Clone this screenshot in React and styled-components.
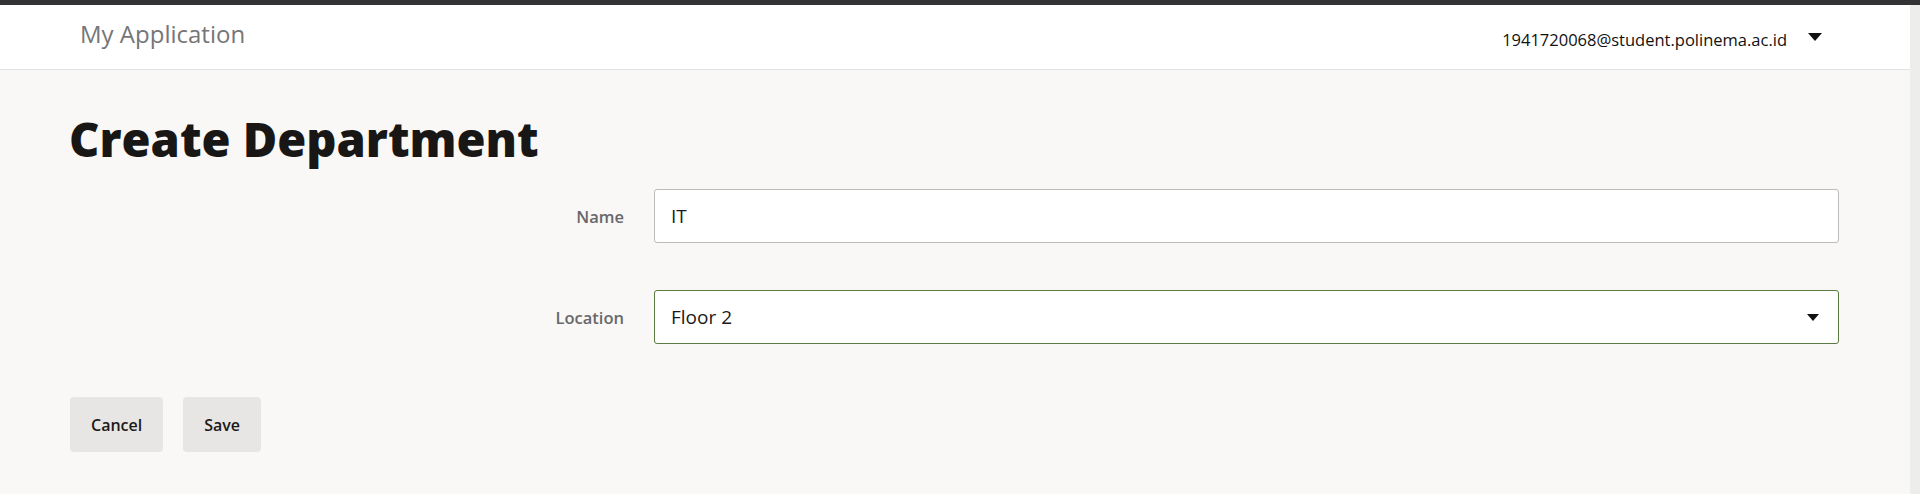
import React from "react";
import styled, { createGlobalStyle } from "styled-components";

const Global = createGlobalStyle`
  html, body { margin: 0; padding: 0; }
  body {
    background: #f9f8f7;
    font-family: "Open Sans", "Noto Sans", sans-serif;
    color: #1b1a19;
  }
`;

const TopStrip = styled.div`
  height: 5px;
  background: #333336;
`;

const Frame = styled.div`
  display: flex;
  min-height: 489px;
`;

const Main = styled.div`
  flex: 1;
  display: flex;
  flex-direction: column;
`;

const ScrollTrack = styled.div`
  width: 10px;
  background: #ededec;
`;

const Header = styled.header`
  height: 64px;
  background: #ffffff;
  border-bottom: 1px solid #e3e2e1;
  display: flex;
  align-items: center;
  justify-content: space-between;
  padding: 0 88px 0 80px;
`;

const Brand = styled.div`
  font-size: 24px;
  font-weight: 400;
  color: #767676;
  margin-top: -7px;
`;

const UserMenu = styled.div`
  display: flex;
  align-items: center;
  gap: 21px;
  font-size: 16.5px;
  color: #111;
`;

const Email = styled.span`
  margin-top: 4px;
`;

const Caret = styled.span`
  width: 0;
  height: 0;
  border-left: ${(p) => p.$w / 2}px solid transparent;
  border-right: ${(p) => p.$w / 2}px solid transparent;
  border-top: ${(p) => p.$h}px solid #111;
`;

const Content = styled.main`
  padding: 0 71px 0 70px;
`;

const Title = styled.h1`
  margin: 39px 0 0 -1px;
  font-size: 47px;
  font-weight: 800;
  line-height: 60px;
  color: #181716;
`;

const Form = styled.form`
  display: grid;
  grid-template-columns: 554px 1fr;
  column-gap: 30px;
  row-gap: 47px;
  margin-top: 20px;
  align-items: center;
`;

const Label = styled.label`
  text-align: right;
  font-size: 16.5px;
  font-weight: 600;
  color: #68676a;
`;

const Field = styled.div`
  height: 54px;
  box-sizing: border-box;
  background: #fff;
  border: 1px solid ${(p) => (p.$focused ? "#5b7a3f" : "#bdbcbb")};
  border-radius: 3px;
  display: flex;
  align-items: center;
  padding: 0 19px 0 16px;
  font-size: 19px;
  color: #1b1a19;
`;

const Value = styled.span`
  flex: 1;
`;

const Actions = styled.div`
  display: flex;
  gap: 20px;
  margin-top: 53px;
`;

const Button = styled.button`
  height: 55px;
  padding: 0 21px;
  border: none;
  border-radius: 4px;
  background: #e8e6e4;
  font-family: inherit;
  font-size: 16px;
  font-weight: 600;
  color: #1b1a19;
`;

export default function App() {
  return (
    <>
      <Global />
      <TopStrip />
      <Frame>
        <Main>
          <Header>
            <Brand>My Application</Brand>
            <UserMenu>
              <Email>1941720068@student.polinema.ac.id</Email>
              <Caret $w={15} $h={8} />
            </UserMenu>
          </Header>
          <Content>
            <Title>Create Department</Title>
            <Form>
              <Label>Name</Label>
              <Field>
                <Value>IT</Value>
              </Field>
              <Label>Location</Label>
              <Field $focused>
                <Value>Floor 2</Value>
                <Caret $w={13} $h={7} />
              </Field>
            </Form>
            <Actions>
              <Button type="button">Cancel</Button>
              <Button type="button">Save</Button>
            </Actions>
          </Content>
        </Main>
        <ScrollTrack />
      </Frame>
    </>
  );
}
